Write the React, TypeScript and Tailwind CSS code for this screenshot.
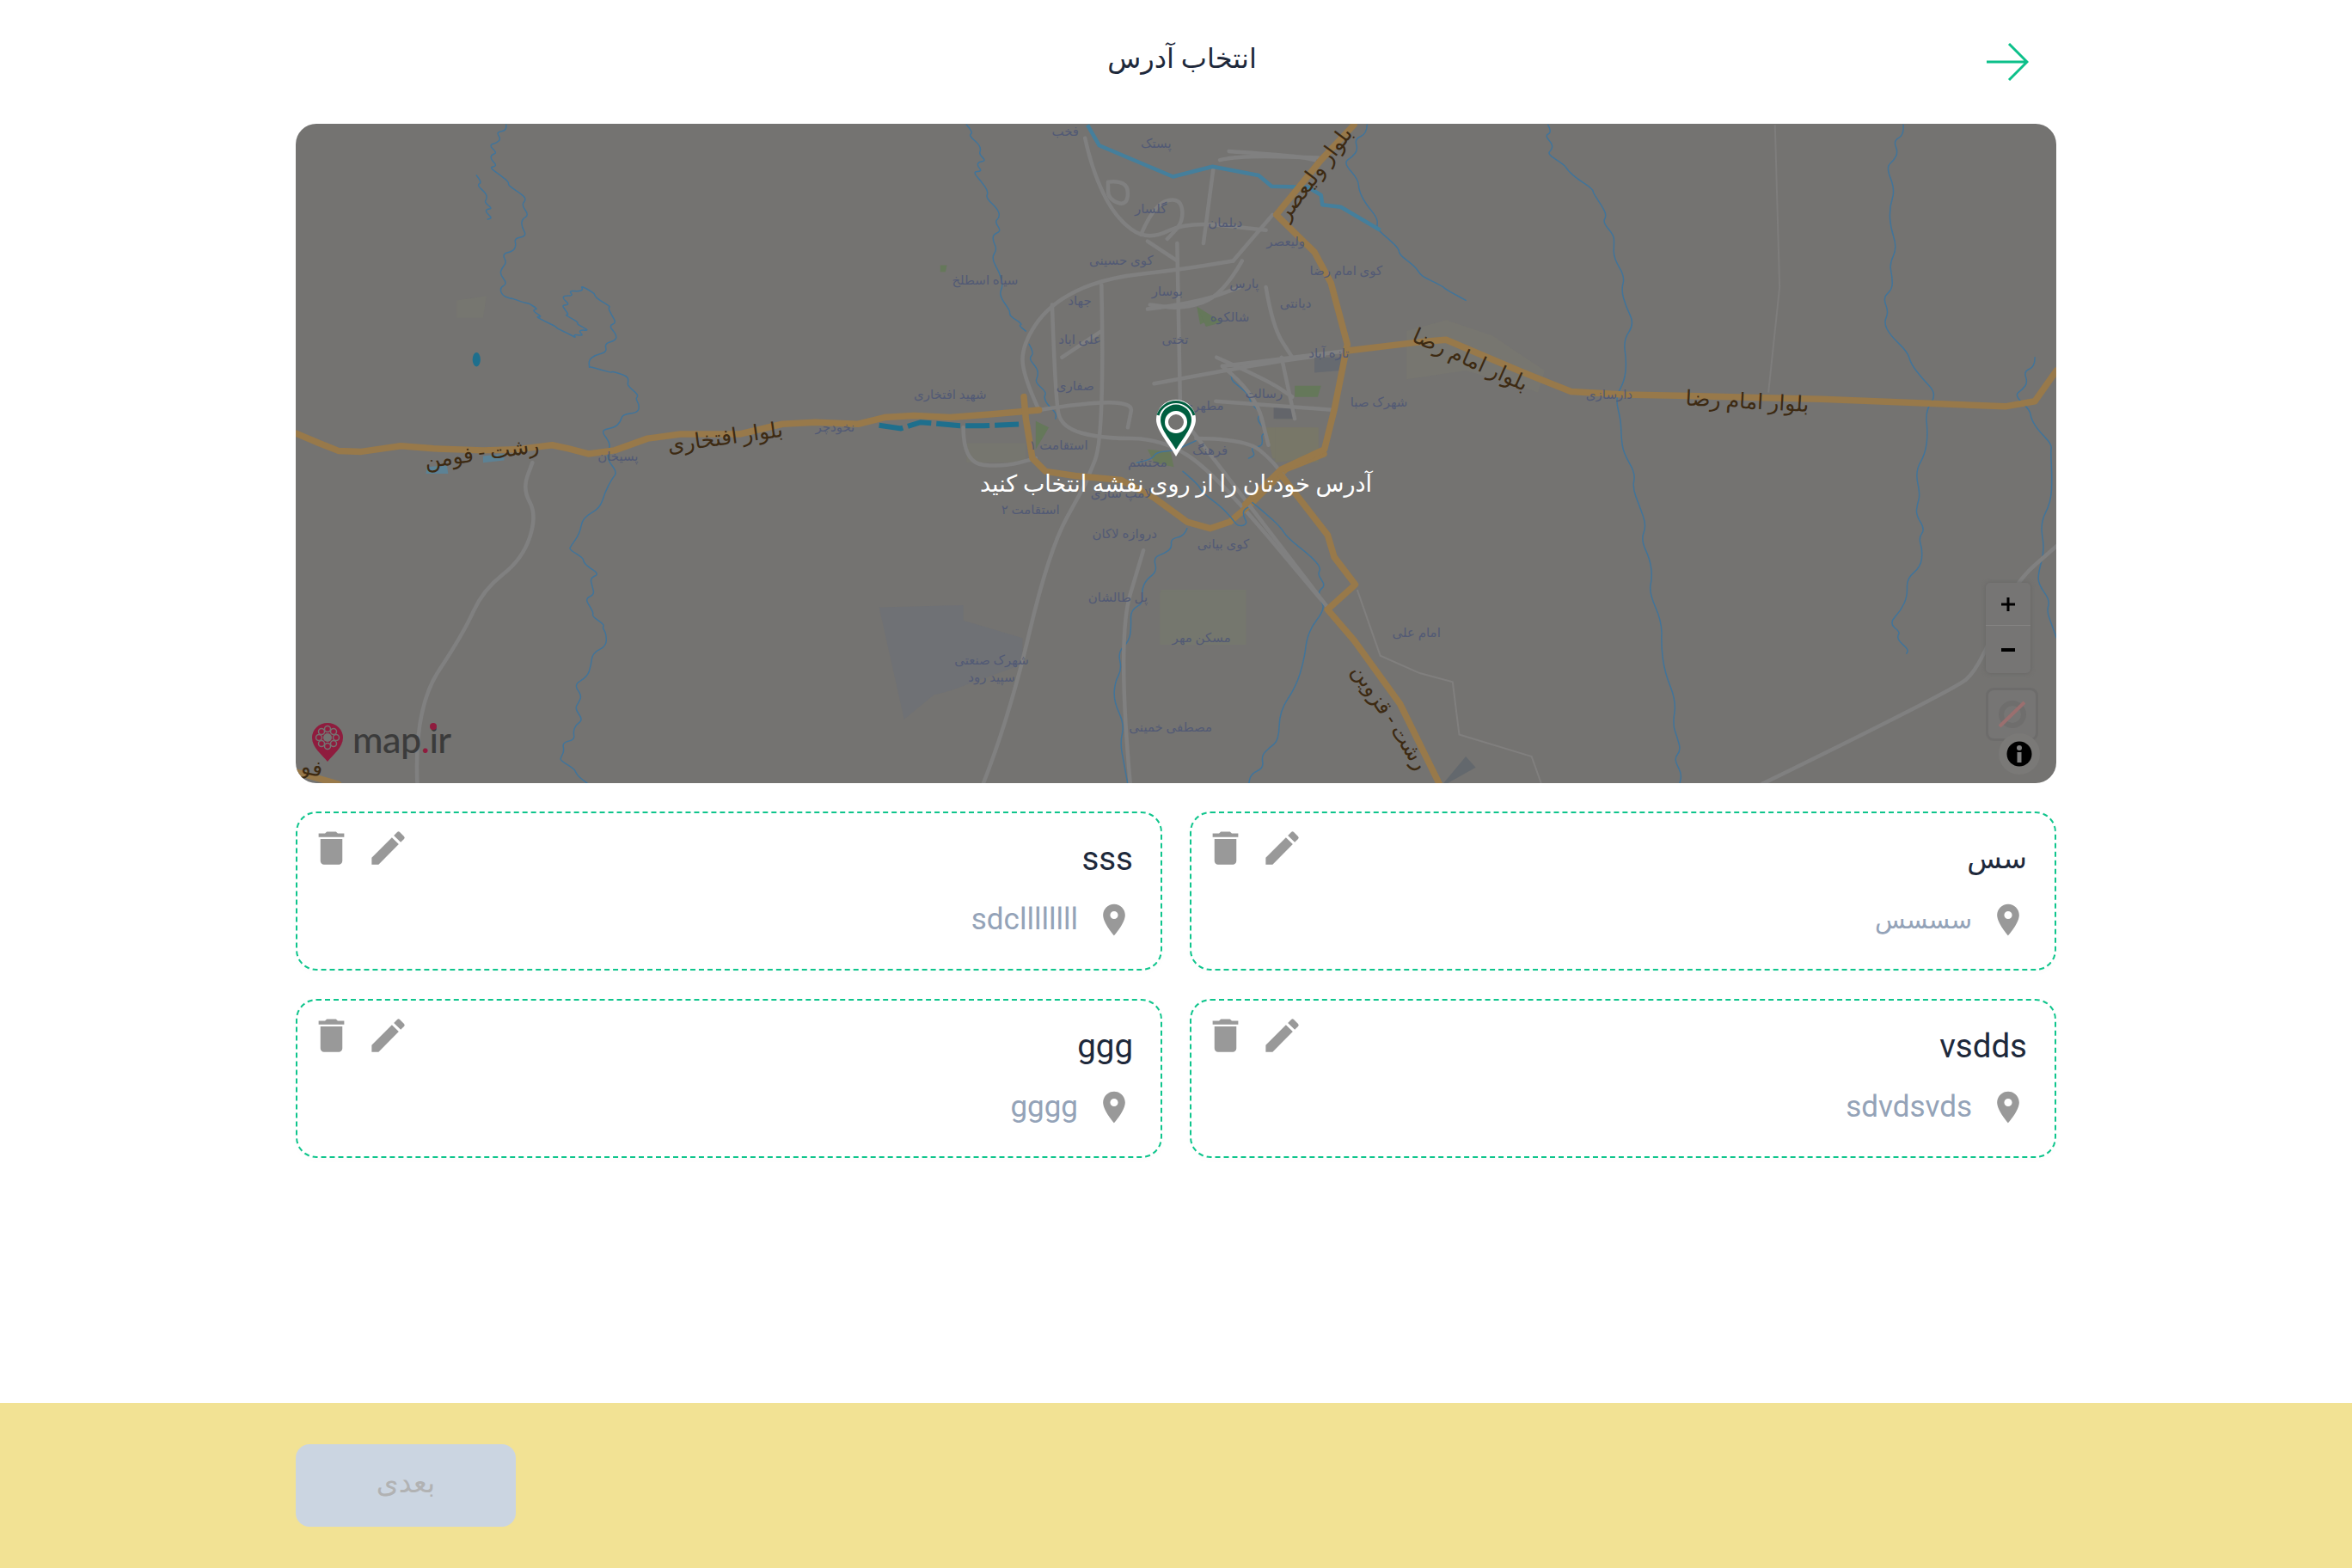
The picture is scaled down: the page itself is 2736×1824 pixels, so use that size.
import { MdDelete, MdEdit, MdLocationOn } from 'react-icons/md'

// map drawing data: coordinates are read off two crops of the map
const X_SCALE = 0.7653
const Y_SCALE = 0.5102

const westMajor = [
  '5,733 40,755 70,773 105,775 165,762 215,768 290,772 340,770 395,760 420,768 450,780 490,772 540,745 590,735 680,735 745,712 795,708 860,712 900,697 945,693 1000,697 1060,690 1135,680',
  '1112,650 1115,700 1125,790 1145,820 1190,830 1260,840 1310,880 1360,935 1395,950 1425,935 1460,890 1510,815 1568,780',
  '5,1505 70,1533',
]
const eastMajor = [
  '325,895 380,815 445,770 460,680 480,530 455,390 430,320 372,235 440,110 490,30',
  '480,545 590,525 630,520 740,590 820,638 900,645 1000,648 1200,655 1480,672 1525,660 1558,590',
  '380,830 450,965 460,1015 492,1078 450,1135 490,1205 560,1350 620,1533',
]
const westMinor = [
  '190,1533 185,1360 260,1190 290,1090 350,1020 372,920 350,860 365,800',
  '1050,1533 1090,1380 1150,1000 1205,850',
  '1135,680 1110,600 1110,530 1150,440 1230,380 1350,360 1430,340',
  '1155,440 1160,660 1170,720 1230,745 1320,745 1400,820 1568,1120',
  '1135,680 1280,645 1270,720',
  '1310,620 1470,575 1568,555',
  '1345,300 1350,690',
  '1205,60 1215,130 1250,240 1300,295 1360,250 1480,270',
  '1300,295 1345,340',
  '1430,340 1490,235',
  '1400,130 1385,300',
  '1410,110 1440,100 1560,105',
  '1240,160 1270,155 1270,215 1240,200 1240,160',
  '1290,280 1310,210 1350,195 1355,250 1330,290',
  '1020,720 1020,800 1080,810 1130,790',
  '1230,395 1235,740 1205,850',
  '1300,450 1375,435 1440,400',
  '1170,560 1230,500',
  '1405,560 1480,610 1520,650',
  '1480,400 1490,490 1520,560',
]
const eastMinor = [
  '320,340 290,420 230,450 180,440',
  '290,580 480,545',
  '1110,1533 1400,1320 1440,1270 1490,1080 1558,990',
  '230,700 450,1130',
  '250,745 325,745 370,800 400,870',
  '280,660 460,680',
  '380,560 400,700',
  '290,580 340,640 360,760',
  '300,90 400,100 430,110',
  '150,1533 130,1200 170,1000',
]
const westRiver = [
  '325,30 305,80 305,130 355,200 350,280 320,340 320,420 365,440 375,470 430,515 445,495 415,460 415,420 445,400 485,450 490,520 445,580 505,600 530,670 475,730 490,840 420,990 460,1050 450,1130 480,1190 435,1310 435,1400 405,1470 450,1533',
  '280,145 298,210 297,245',
  '1025,30 1050,100 1040,140 1075,240 1065,310 1085,450 1115,500',
  '1360,950 1315,1020 1280,1140 1250,1300 1270,1533',
  '1120,530 1135,620 1160,700',
]
const eastRiver = [
  '785,30 790,100 860,190 885,300 910,480 890,700 925,900 945,1100 980,1400 985,1533',
  '1325,30 1305,130 1310,350 1295,480 1370,640 1345,870 1355,1000 1310,1170 1330,1235',
  '1525,560 1500,650 1555,780 1530,1050 1558,1200',
  '510,30 480,120 530,270 590,370 660,430',
  '230,820 320,950 330,880 440,1040 440,1130 370,1430 330,1533',
  '290,580 340,670 355,740 330,790',
  '160,800 250,750',
]
const thickRiver = '85,30 103,77 215,148 275,125 345,145 365,170 420,172 440,190 442,212 470,217 530,270'

type Label = [number, number, string, number?]

const westLabels: Label[] = [
  [495, 785, 'پسیخان'], [825, 720, 'نخودچر'], [1000, 645, 'شهید افتخاری'], [1053, 385, 'سیاه اسطلخ'],
  [1175, 45, 'فخب'], [1313, 72, 'پستک'], [1305, 222, 'گلسار'], [1418, 253, 'دیلمان'], [1510, 295, 'ولیعصر'],
  [1260, 340, 'کوی حسینی'], [1447, 392, 'پارس'], [1330, 410, 'بوسار'], [1197, 432, 'جهاد'], [1525, 438, 'دیانتی'],
  [1425, 468, 'شالکوه'], [1197, 520, 'علی اباد'], [1342, 520, 'تختی'], [1190, 625, 'صفاری'], [1477, 643, 'رسالت'],
  [1385, 670, 'مطهری'], [1395, 773, 'فرهنگ'], [1165, 760, 'استقامت ۱'], [1300, 800, 'محتشم'], [1260, 870, 'لامپ سازی'],
  [1122, 908, 'استقامت ۲'], [1265, 963, 'دروازه لاکان'], [1415, 985, 'کوی بیانی'], [1255, 1108, 'پل طالشان'],
  [1382, 1200, 'مسکن مهر'], [1063, 1250, 'شهرک صنعتی'], [1063, 1290, 'سپید رود'], [1335, 1403, 'مصطفی خمینی'],
]
const eastLabels: Label[] = [
  [478, 362, 'کوی امام رضا'], [452, 550, 'تازه آباد'], [528, 662, 'شهرک صبا'], [878, 645, 'دارسازی'], [585, 1188, 'امام علی'],
]
const westRoadLabels: Label[] = [
  [288, 778, 'رشت - فومن', -8], [658, 742, 'بلوار افتخاری', -8], [30, 1496, 'فو', 10],
]
const eastRoadLabels: Label[] = [
  [430, 140, 'بلوار ولیعصر', -53], [667, 565, 'بلوار امام رضا', 24], [1088, 660, 'بلوار امام رضا', 3], [545, 1380, 'رشت - قزوین', 57],
]

// rounds the corners of a read-off polyline, and can add a small meander for rivers
function toPath(points: string, wiggle = 0) {
  let pts = points.split(' ').map((p) => p.split(',').map(Number))
  if (wiggle > 0) {
    const out: number[][] = []
    pts.forEach((p, i) => {
      const next = pts[i + 1]
      if (!next) {
        out.push(p)
        return
      }
      for (let s = 0; s < 5; s++) {
        const t = s / 5
        const off = Math.sin((i * 5 + s) * 2.3) * wiggle
        out.push([p[0] + (next[0] - p[0]) * t + off, p[1] + (next[1] - p[1]) * t + off * 0.6])
      }
    })
    pts = out
  }
  let d = `M${pts[0][0]} ${pts[0][1]}`
  for (let i = 1; i < pts.length - 1; i++) {
    const mx = (pts[i][0] + pts[i + 1][0]) / 2
    const my = (pts[i][1] + pts[i + 1][1]) / 2
    d += `Q${pts[i][0]} ${pts[i][1]} ${mx} ${my}`
  }
  const last = pts[pts.length - 1]
  return `${d}L${last[0]} ${last[1]}`
}

function Lines({ items, color, width, wiggle }: { items: string[]; color: string; width: number; wiggle?: number }) {
  return (
    <>
      {items.map((points) => (
        <path key={points} d={toPath(points, wiggle)} fill="none" stroke={color} strokeWidth={width} strokeLinejoin="round" strokeLinecap="round" vectorEffect="non-scaling-stroke" />
      ))}
    </>
  )
}

// highways keep their corners
function Highways({ items }: { items: string[] }) {
  return (
    <>
      {items.map((points) => (
        <polyline key={points} points={points} fill="none" stroke="#98794a" strokeWidth={7.5} strokeLinejoin="round" strokeLinecap="round" vectorEffect="non-scaling-stroke" />
      ))}
    </>
  )
}

function Labels({ items, originX, color, size }: { items: Label[]; originX: number; color: string; size: number }) {
  return (
    <>
      {items.map(([x, y, text, rotate]) => (
        <text
          key={text + x}
          transform={`translate(${originX + x * X_SCALE} ${130 + y * Y_SCALE}) rotate(${rotate ?? 0})`}
          textAnchor="middle"
          dominantBaseline="central"
          fontSize={size}
          fill={color}
        >
          {text}
        </text>
      ))}
    </>
  )
}

function MapDrawing() {
  return (
    <svg viewBox="344 144 2048 767" className="block h-full w-full">
      <rect x="344" y="144" width="2048" height="767" fill="#747371" />
      <g transform={`translate(340 130) scale(${X_SCALE} ${Y_SCALE})`}>
        <polygon points="892,1130 1020,1125 1020,1160 1110,1200 1110,1260 1000,1320 975,1330 930,1385" fill="#6f7175" />
        <polygon points="250,430 295,420 290,470 250,470" fill="#767670" />
        <polygon points="1320,1090 1450,1090 1450,1215 1320,1215" fill="#75776e" />
        <polygon points="1025,755 1115,755 1115,800 1025,800" fill="#76766f" />
        <polygon points="1300,770 1335,775 1340,810 1310,800" fill="#68785a" />
        <polygon points="1375,445 1400,470 1380,485" fill="#65785a" />
        <polygon points="1130,705 1150,720 1130,770" fill="#65785a" />
        <polygon points="1495,670 1525,670 1525,700 1495,700" fill="#6a6b6f" />
        <polygon points="1480,720 1560,720 1560,800 1490,790" fill="#787768" />
        <polygon points="985,350 995,350 993,365 985,365" fill="#65785a" />
        <polygon points="205,810 235,806 237,825 203,825" fill="#5c8295" />
        <polygon points="290,785 322,780 322,795 290,800" fill="#5c8295" />
        <ellipse cx="280" cy="565" rx="6" ry="16" fill="#1e6f8d" />
        <polyline points="892,715 925,722 955,708 1015,716 1050,716 1110,712" fill="none" stroke="#1e6f8d" strokeWidth="6" strokeDasharray="28 6" vectorEffect="non-scaling-stroke" />
        <Lines items={westRiver} color="#41749a" width={1.5} wiggle={7} />
        <Lines items={westMinor} color="#808080" width={4.5} />
        <Highways items={westMajor} />
      </g>
      <g transform={`translate(1200 130) scale(${X_SCALE} ${Y_SCALE})`}>
        <polygon points="570,500 630,475 700,510 780,590 770,640 660,590 570,610" fill="#777670" />
        <polygon points="195,1095 325,1095 325,1215 195,1215" fill="#75776e" />
        <polygon points="370,720 425,720 425,790 370,800" fill="#787768" />
        <polygon points="252,445 290,480 265,490" fill="#65785a" />
        <polygon points="400,625 440,625 435,650 400,650" fill="#65785a" />
        <polygon points="430,560 475,560 470,590 430,595" fill="#666a70" />
        <polygon points="368,675 398,675 398,700 368,700" fill="#63656a" />
        <polygon points="660,1470 675,1495 630,1533 625,1533" fill="#63686d" />
        <Lines items={eastRiver} color="#41749a" width={1.5} wiggle={7} />
        <Lines items={eastMinor} color="#808080" width={4.5} />
        <polyline points="1130,30 1137,400 1120,640" fill="none" stroke="#7e7d7c" strokeWidth="2" vectorEffect="non-scaling-stroke" />
        <polyline points="495,1090 530,1240 590,1280 640,1300 650,1420 760,1470 775,1533" fill="none" stroke="#807f7e" strokeWidth="2" vectorEffect="non-scaling-stroke" />
        <polyline points={thickRiver} fill="none" stroke="#457f9c" strokeWidth="4.5" strokeLinejoin="round" vectorEffect="non-scaling-stroke" />
        <Highways items={eastMajor} />
      </g>
      <Labels items={westLabels} originX={340} color="#525a75" size={15} />
      <Labels items={eastLabels} originX={1200} color="#525a75" size={15} />
      <Labels items={westRoadLabels} originX={340} color="#3d2a12" size={25} />
      <Labels items={eastRoadLabels} originX={1200} color="#3d2a12" size={25} />
    </svg>
  )
}

function MapLogo() {
  return (
    <div className="absolute bottom-[23px] left-[19px] flex items-center gap-[11px]" dir="ltr">
      <svg width="36" height="45" viewBox="0 0 36 45">
        <path d="M18 45C12 37 0 29 0 17a18 17 0 0 1 36 0c0 12-12 20-18 28z" fill="#8f1c3e" />
        <circle cx="18" cy="17" r="5" fill="#747371" />
        <g fill="none" stroke="#747371" strokeWidth="1.500">
          <circle cx="18" cy="7" r="3.500" /><circle cx="25" cy="10" r="3.500" /><circle cx="28" cy="17" r="3.500" /><circle cx="25" cy="24" r="3.500" />
          <circle cx="18" cy="27" r="3.500" /><circle cx="11" cy="24" r="3.500" /><circle cx="8" cy="17" r="3.500" /><circle cx="11" cy="10" r="3.500" />
        </g>
      </svg>
      <span className="mb-[7px] font-['Lato',sans-serif] text-[43px] leading-none font-medium tracking-[-0.5px] text-[#3b3b3b]">
        map<span className="text-[#8f1c3e]">.</span>
        <span className="relative">
          i<span className="absolute top-[7px] left-[1px] h-[8px] w-[8px] rounded-full bg-[#8f1c3e]" />
        </span>
        r
      </span>
    </div>
  )
}

function MapControls() {
  return (
    <div className="absolute top-[534px] right-[18px] flex flex-col items-end">
      <div className="mr-[12px] flex w-[52px] flex-col rounded-[5px] bg-[#767574] shadow-[0_0_5px_#666564]">
        <div className="flex h-[50px] items-center justify-center border-b border-[#858483] text-black">
          <svg width="16" height="16" viewBox="0 0 16 16"><path d="M6.500 0h3v6.500H16v3H9.500V16h-3V9.500H0v-3h6.500z" /></svg>
        </div>
        <div className="flex h-[55px] items-center justify-center text-black">
          <svg width="16" height="4" viewBox="0 0 16 4"><rect width="16" height="4" /></svg>
        </div>
      </div>
      <div className="mt-[17px] flex h-[62px] w-[61px] items-center justify-center rounded-[9px] border-[3px] border-[#6d6c6b] bg-[#767574]">
        <svg width="36" height="36" viewBox="0 0 36 36">
          <circle cx="18" cy="18" r="13" fill="none" stroke="#6f6e6d" strokeWidth="6" />
          <line x1="3" y1="32" x2="32" y2="4" stroke="#9b6f6f" strokeWidth="4" />
        </svg>
      </div>
    </div>
  )
}

function MapInfo() {
  return (
    <div className="absolute right-[19px] bottom-[10px] flex h-[48px] w-[48px] items-center justify-center rounded-full bg-[#7a7977]">
      <svg width="30" height="30" viewBox="0 0 30 30">
        <circle cx="15" cy="15" r="14.500" fill="#000" />
        <circle cx="15" cy="8" r="3" fill="#7f7f7f" />
        <rect x="12.500" y="13" width="5" height="12" fill="#7f7f7f" />
      </svg>
    </div>
  )
}

function MapPin() {
  return (
    <svg width="48" height="68" viewBox="0 0 48 68">
      <path d="M24 67C14 50 1 36 1 24a23 23 0 0 1 46 0c0 12-13 26-23 43z" fill="#fff" />
      <path d="M24 59C16 46 6 35 6 24.500a18 18 0 0 1 36 0C42 35 32 46 24 59z" fill="#005f40" />
      <path d="M3 19A22 22 0 0 1 45 19" fill="none" stroke="#005f40" strokeWidth="3" />
      <circle cx="24" cy="27" r="11" fill="#747371" stroke="#fff" strokeWidth="4" />
    </svg>
  )
}

function AddressCard({ title, address, persian }: { title: string; address: string; persian?: boolean }) {
  return (
    <div className="flex h-[185px] justify-between rounded-[24px] border-2 border-dashed border-[#0fc58c] pt-[15px] pr-[32px] pl-[14px] shadow-[0_2px_10px_rgba(0,0,0,0.015)]">
      <div className="flex flex-col items-start pt-[15px]">
        <div className={persian ? 'text-[33px] leading-[46px] text-[#1e293b]' : 'text-[38.5px] leading-[46px] text-[#1e293b]'}>{title}</div>
        <div className="mt-[26px] flex items-center gap-[20px]">
          <MdLocationOn size={44} className="text-[#999999]" />
          <div className={persian ? 'text-[29px] leading-[42px] text-[#94a3b8]' : 'text-[35px] leading-[42px] text-[#94a3b8]'}>{address}</div>
        </div>
      </div>
      <div className="flex flex-row-reverse gap-[15px]">
        <MdDelete size={51} className="text-[#999999]" />
        <MdEdit size={51} className="text-[#999999]" />
      </div>
    </div>
  )
}

export default function App() {
  return (
    <div dir="rtl" className="flex min-h-[1824px] flex-col bg-white font-['Roboto','DejaVu_Sans',sans-serif]">
      <main className="mx-auto w-[2048px] flex-1">
        {/* Header */}
        <div className="grid h-[144px] grid-cols-[1fr_auto_1fr] items-center">
          <div className="flex pr-[32px]">
            <svg width="50" height="44" viewBox="0 0 50 44" fill="none" stroke="#0cc08a" strokeWidth="3">
              <path d="M48 22H1M27 1l21 21-21 21" />
            </svg>
          </div>
          <h1 className="pb-[8px] pl-[14px] text-[32px] font-normal text-[#1e293b]">انتخاب آدرس</h1>
          <div />
        </div>

        {/* Map */}
        <div className="relative h-[767px] overflow-hidden rounded-[24px]">
          <MapDrawing />
          <div className="absolute top-[320px] left-[1000px] flex flex-col items-center">
            <MapPin />
          </div>
          <div className="absolute top-[399px] left-0 w-full text-center text-[27px] text-white">
            آدرس خودتان را از روی نقشه انتخاب کنید
          </div>
          <MapLogo />
          <MapControls />
          <MapInfo />
        </div>

        {/* Saved addresses */}
        <div className="mt-[33px] grid grid-cols-2 gap-x-[32px] gap-y-[33px]">
          <AddressCard title="سس" address="سسسس" persian />
          <AddressCard title="sss" address="sdcllllllll" />
          <AddressCard title="vsdds" address="sdvdsvds" />
          <AddressCard title="ggg" address="gggg" />
        </div>
      </main>

      {/* Footer */}
      <footer className="flex h-[192px] items-center justify-end bg-[#f2e294] pl-[344px]">
        <button type="button" className="h-[96px] w-[256px] rounded-[16px] bg-[#cbd5e1] pb-[6px] text-[33px] text-[#b1b2b3]">
          بعدی
        </button>
      </footer>
    </div>
  )
}
